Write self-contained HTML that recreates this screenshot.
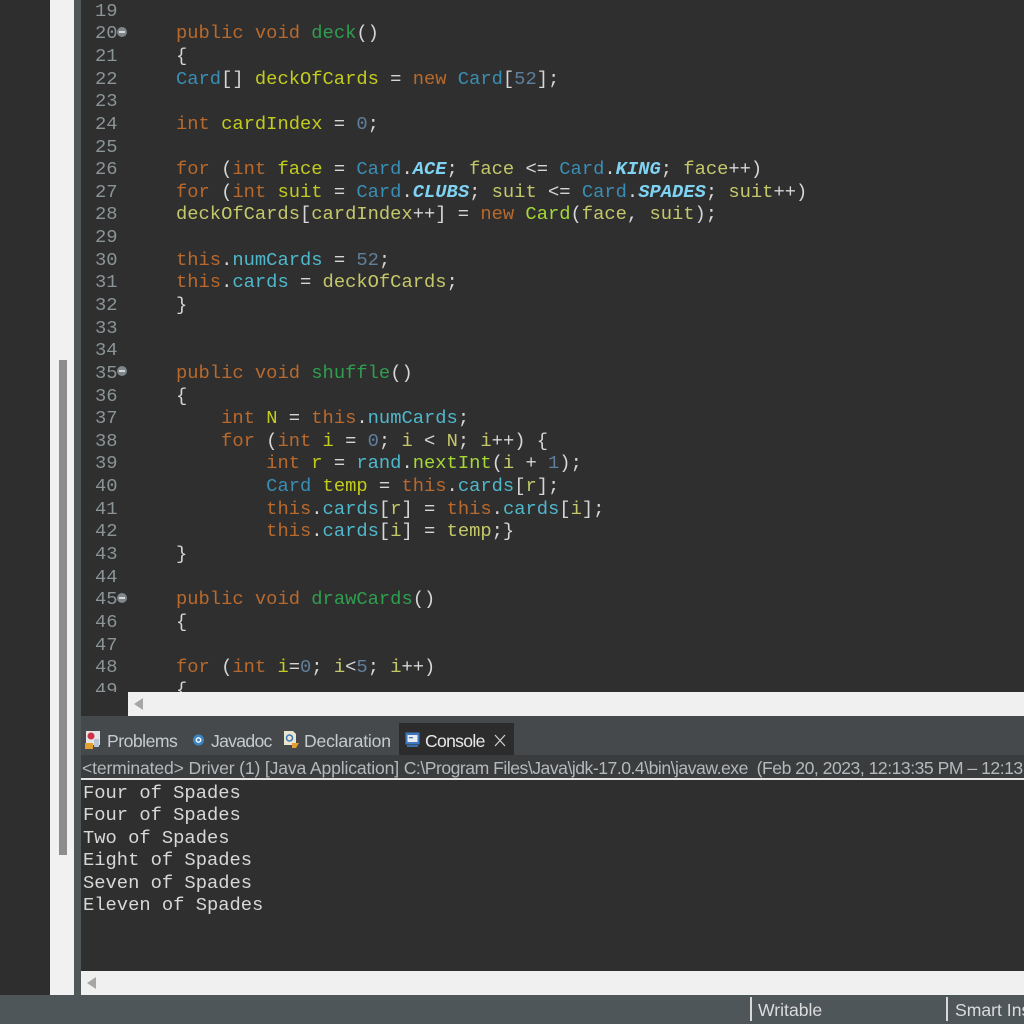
<!DOCTYPE html>
<html><head><meta charset="utf-8"><style>
html,body{margin:0;padding:0;background:#2f2f2f}
#p{position:relative;width:1024px;height:1024px;overflow:hidden;background:#2f2f2f;font-family:"Liberation Mono",monospace;filter:blur(.35px)}
.b{position:absolute}
.l{position:absolute;left:176px;margin-top:1px;font-size:18.8px;line-height:22px;height:22px;white-space:pre;color:#d6d6d6}
.n{position:absolute;left:95px;margin-top:1px;font-size:18.8px;line-height:22px;height:22px;color:#8b9496;white-space:pre}
.c{position:absolute;left:83px;font-size:18.8px;line-height:22px;white-space:pre;color:#d8d8d8}
.k{color:#b9692c}.m{color:#2f9e4f}.t{color:#3a8eb5}.v{color:#c3cc1e}.w{color:#c5c86a}.u{color:#5f7f9c}.f{color:#4fb8cc}.s{color:#7fd3f2;font-weight:bold;font-style:italic}.g{color:#a5d936}
.ui{position:absolute;font-family:"Liberation Sans",sans-serif;font-size:17.6px;line-height:22px;white-space:pre;color:#c6cbcd}
.fold{position:absolute;left:117px;width:10px;height:10px;border-radius:50%;background:#7f878b}
.fold:after{content:"";position:absolute;left:2px;top:4px;width:6px;height:2px;background:#d4d6d8}
</style></head><body><div id="p">
<div class="b" style="left:0;top:0;width:50px;height:995px;background:#2e2e2e"></div>
<div class="b" style="left:50px;top:0;width:24px;height:995px;background:#f1f1f1"></div>
<div class="b" style="left:59px;top:360px;width:8px;height:495px;background:#8d8d8d"></div>
<div class="b" style="left:74px;top:0;width:7px;height:995px;background:#50575a"></div>

<div class="n" style="top:-1px">19</div>
<div class="n" style="top:21px">20</div><div class="fold" style="top:27px"></div>
<div class="n" style="top:44px">21</div>
<div class="n" style="top:67px">22</div>
<div class="n" style="top:89px">23</div>
<div class="n" style="top:112px">24</div>
<div class="n" style="top:135px">25</div>
<div class="n" style="top:157px">26</div>
<div class="n" style="top:180px">27</div>
<div class="n" style="top:202px">28</div>
<div class="n" style="top:225px">29</div>
<div class="n" style="top:248px">30</div>
<div class="n" style="top:270px">31</div>
<div class="n" style="top:293px">32</div>
<div class="n" style="top:316px">33</div>
<div class="n" style="top:338px">34</div>
<div class="n" style="top:361px">35</div><div class="fold" style="top:366px"></div>
<div class="n" style="top:384px">36</div>
<div class="n" style="top:406px">37</div>
<div class="n" style="top:429px">38</div>
<div class="n" style="top:451px">39</div>
<div class="n" style="top:474px">40</div>
<div class="n" style="top:497px">41</div>
<div class="n" style="top:519px">42</div>
<div class="n" style="top:542px">43</div>
<div class="n" style="top:565px">44</div>
<div class="n" style="top:587px">45</div><div class="fold" style="top:593px"></div>
<div class="n" style="top:610px">46</div>
<div class="n" style="top:633px">47</div>
<div class="n" style="top:655px">48</div>
<div class="n" style="top:678px">49</div>

<div class="l" style="top:21px"><span class="k">public</span> <span class="k">void</span> <span class="m">deck</span>()</div>
<div class="l" style="top:44px">{</div>
<div class="l" style="top:67px"><span class="t">Card</span>[] <span class="v">deckOfCards</span> = <span class="k">new</span> <span class="t">Card</span>[<span class="u">52</span>];</div>
<div class="l" style="top:112px"><span class="k">int</span> <span class="v">cardIndex</span> = <span class="u">0</span>;</div>
<div class="l" style="top:157px"><span class="k">for</span> (<span class="k">int</span> <span class="v">face</span> = <span class="t">Card</span>.<span class="s">ACE</span>; <span class="w">face</span> &lt;= <span class="t">Card</span>.<span class="s">KING</span>; <span class="w">face</span>++)</div>
<div class="l" style="top:180px"><span class="k">for</span> (<span class="k">int</span> <span class="v">suit</span> = <span class="t">Card</span>.<span class="s">CLUBS</span>; <span class="w">suit</span> &lt;= <span class="t">Card</span>.<span class="s">SPADES</span>; <span class="w">suit</span>++)</div>
<div class="l" style="top:202px"><span class="w">deckOfCards</span>[<span class="w">cardIndex</span>++] = <span class="k">new</span> <span class="g">Card</span>(<span class="w">face</span>, <span class="w">suit</span>);</div>
<div class="l" style="top:248px"><span class="k">this</span>.<span class="f">numCards</span> = <span class="u">52</span>;</div>
<div class="l" style="top:270px"><span class="k">this</span>.<span class="f">cards</span> = <span class="w">deckOfCards</span>;</div>
<div class="l" style="top:293px">}</div>
<div class="l" style="top:361px"><span class="k">public</span> <span class="k">void</span> <span class="m">shuffle</span>()</div>
<div class="l" style="top:384px">{</div>
<div class="l" style="top:406px">    <span class="k">int</span> <span class="v">N</span> = <span class="k">this</span>.<span class="f">numCards</span>;</div>
<div class="l" style="top:429px">    <span class="k">for</span> (<span class="k">int</span> <span class="v">i</span> = <span class="u">0</span>; <span class="w">i</span> &lt; <span class="w">N</span>; <span class="w">i</span>++) {</div>
<div class="l" style="top:451px">        <span class="k">int</span> <span class="v">r</span> = <span class="f">rand</span>.<span class="g">nextInt</span>(<span class="w">i</span> + <span class="u">1</span>);</div>
<div class="l" style="top:474px">        <span class="t">Card</span> <span class="v">temp</span> = <span class="k">this</span>.<span class="f">cards</span>[<span class="w">r</span>];</div>
<div class="l" style="top:497px">        <span class="k">this</span>.<span class="f">cards</span>[<span class="w">r</span>] = <span class="k">this</span>.<span class="f">cards</span>[<span class="w">i</span>];</div>
<div class="l" style="top:519px">        <span class="k">this</span>.<span class="f">cards</span>[<span class="w">i</span>] = <span class="w">temp</span>;}</div>
<div class="l" style="top:542px">}</div>
<div class="l" style="top:587px"><span class="k">public</span> <span class="k">void</span> <span class="m">drawCards</span>()</div>
<div class="l" style="top:610px">{</div>
<div class="l" style="top:655px"><span class="k">for</span> (<span class="k">int</span> <span class="v">i</span>=<span class="u">0</span>; <span class="w">i</span>&lt;<span class="u">5</span>; <span class="w">i</span>++)</div>
<div class="l" style="top:678px">{</div>

<div class="b" style="left:81px;top:692px;width:47px;height:24px;background:#2f2f2f"></div>
<div class="b" style="left:128px;top:692px;width:896px;height:24px;background:#f0f0f0"></div>
<svg class="b" style="left:134px;top:698px" width="10" height="12"><path d="M9 0V12L0 6Z" fill="#a6a6a6"/></svg>

<div class="b" style="left:81px;top:716px;width:943px;height:39px;background:#45494b"></div>
<div class="b" style="left:399px;top:723px;width:115px;height:32px;background:#2c2c2c"></div>

<svg class="b" style="left:84px;top:730px" width="18" height="20"><rect x="2" y="1" width="14" height="14" fill="#e4e4e4"/><circle cx="7" cy="6" r="3.5" fill="#d0304a"/><rect x="10" y="9" width="5" height="8" fill="#b8c4d4"/><rect x="1" y="13" width="8" height="6" fill="#e0a030"/></svg>
<div class="ui" style="left:107px;top:730px;letter-spacing:-.5px">Problems</div>
<svg class="b" style="left:192px;top:733px" width="13" height="14"><circle cx="6.5" cy="7" r="5.5" fill="#3a86c8"/><circle cx="6.5" cy="7" r="2.2" fill="none" stroke="#fff" stroke-width="1.4"/></svg>
<div class="ui" style="left:211px;top:730px;letter-spacing:-.7px">Javadoc</div>
<svg class="b" style="left:283px;top:730px" width="17" height="20"><path d="M1 1H10L13 4V15H1Z" fill="#e8e4d0"/><circle cx="6.5" cy="8" r="3" fill="none" stroke="#3a78b8" stroke-width="1.5"/><path d="M9 13H16L13 18H9Z" fill="#e0a030"/></svg>
<div class="ui" style="left:304px;top:730px;letter-spacing:-.2px">Declaration</div>
<svg class="b" style="left:405px;top:732px" width="15" height="16"><rect x="0.5" y="0.5" width="14" height="12" fill="#3f78c0"/><rect x="2.5" y="3" width="10" height="7" fill="#e8edf2"/><rect x="4" y="5" width="4" height="1.3" fill="#3f78c0"/><rect x="2" y="13" width="11" height="2" fill="#3a6fa8"/></svg>
<div class="ui" style="left:425px;top:730px;color:#e8e8e8;letter-spacing:-.7px">Console</div>
<svg class="b" style="left:494px;top:734px" width="12" height="13"><path d="M1 1L11 12M11 1L1 12" stroke="#d0d0d0" stroke-width="1.2" fill="none"/></svg>

<div class="b" style="left:81px;top:755px;width:943px;height:24px;background:#3a3c3e"></div>
<div class="ui" style="left:82px;top:757px;color:#b4b9bb;letter-spacing:-.16px">&lt;terminated&gt; Driver (1) [Java Application] <span style="letter-spacing:-.49px">C:\Program Files\Java\jdk-17.0.4\bin\javaw.exe  (Feb 20, 2023, 12:13:35 PM – 12:13:35 PM)</span></div>
<div class="b" style="left:81px;top:778px;width:943px;height:2px;background:#e4e4e4"></div>

<div class="c" style="top:782px">Four of Spades</div>
<div class="c" style="top:804px">Four of Spades</div>
<div class="c" style="top:827px">Two of Spades</div>
<div class="c" style="top:849px">Eight of Spades</div>
<div class="c" style="top:872px">Seven of Spades</div>
<div class="c" style="top:894px">Eleven of Spades</div>

<div class="b" style="left:81px;top:971px;width:943px;height:24px;background:#f0f0f0"></div>
<svg class="b" style="left:87px;top:977px" width="10" height="12"><path d="M9 0V12L0 6Z" fill="#a6a6a6"/></svg>

<div class="b" style="left:0;top:995px;width:1024px;height:29px;background:#4e5659"></div>
<div class="b" style="left:750px;top:997px;width:2px;height:24px;background:#d8d8d8"></div>
<div class="b" style="left:946px;top:997px;width:2px;height:24px;background:#d8d8d8"></div>
<div class="ui" style="left:758px;top:999px;color:#dcdcdc">Writable</div>
<div class="ui" style="left:955px;top:999px;color:#dcdcdc">Smart Insert</div>
</div></body></html>
